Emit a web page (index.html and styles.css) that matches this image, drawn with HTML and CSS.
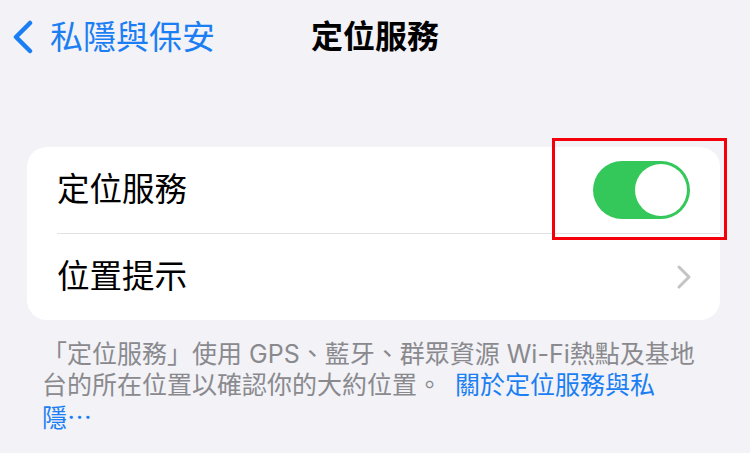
FILE: index.html
```html
<!DOCTYPE html>
<html lang="zh-Hant">
<head>
    <meta charset="UTF-8">
    <meta name="viewport" content="width=device-width, initial-scale=1.0">
    <title>定位服務</title>
    <link rel="stylesheet" href="styles.css">
</head>
<body>
    <header class="nav">
        <a class="nav-back" href="#">
            <svg class="back-icon" width="22" height="34" viewBox="0 0 22 34">
                <polyline points="18,3 4,17 18,31" fill="none" stroke="currentColor" stroke-width="4.5" stroke-linecap="round" stroke-linejoin="round"/>
            </svg>
            <span>私隱與保安</span>
        </a>
        <h1 class="nav-title">定位服務</h1>
        <div></div>
    </header>

    <section class="card">
        <div class="row">
            <span class="row-label">定位服務</span>
            <div class="toggle-wrap">
                <div class="toggle on"><div class="knob"></div></div>
                <div class="highlight"></div>
            </div>
        </div>
        <div class="row">
            <span class="row-label">位置提示</span>
            <svg class="chevron" width="16" height="26" viewBox="0 0 16 26">
                <polyline points="3,3 13,13 3,23" fill="none" stroke="currentColor" stroke-width="3" stroke-linecap="round" stroke-linejoin="round"/>
            </svg>
        </div>
    </section>

    <p class="footnote">「定位服務」使用 GPS、藍牙、群眾資源 Wi-Fi熱點及基地台的所在位置以確認你的大約位置。 <a href="#">關於定位服務與私<span class="cjk">隱…</span></a></p>
</body>
</html>
```

FILE: styles.css
```css
body {
    margin: 0;
    background-color: #f2f2f7;
    font-family: Inter, "Noto Sans CJK TC", "Noto Sans", sans-serif;
    color: #000;
}

.nav {
    display: grid;
    grid-template-columns: 1fr auto 1fr;
    align-items: center;
    height: 40px;
    padding-top: 17px;
}

.nav-back {
    display: flex;
    align-items: center;
    gap: 16px;
    padding-left: 12px;
    color: #1b7ff3;
    text-decoration: none;
    font-size: 33px;
    line-height: 40px;
}

.back-icon {
    display: block;
}

.nav-title {
    margin: 0;
    font-size: 32px;
    font-weight: 700;
    line-height: 40px;
}

.card {
    margin: 90px 30px 0 27px;
    background-color: #fff;
    border-radius: 20px;
}

.row {
    display: flex;
    align-items: center;
    justify-content: space-between;
    height: 86px;
    margin-left: 30px;
    padding-right: 30px;
}

.row + .row {
    border-top: 1.5px solid #e2e2e5;
}

.row-label {
    font-size: 32.5px;
    line-height: 40px;
}

.toggle-wrap {
    position: relative;
}

.toggle {
    width: 97px;
    height: 58px;
    border-radius: 29px;
    background-color: #e5e5ea;
    box-sizing: border-box;
    padding: 3px;
}

.toggle.on {
    background-color: #34c759;
    display: flex;
    justify-content: flex-end;
}

.knob {
    width: 52px;
    height: 52px;
    border-radius: 50%;
    background-color: #fff;
}

/* red annotation box around the switch */
.highlight {
    position: absolute;
    left: -41px;
    top: -23px;
    width: 175px;
    height: 102px;
    border: 3px solid #f5000a;
    box-sizing: border-box;
}

.chevron {
    display: block;
    color: #c4c4c7;
    margin-right: -2px;
}

.footnote {
    margin: 19px 52px 0 42px;
    font-size: 25px;
    line-height: 31px;
    color: #8a8a8e;
}

.footnote a {
    margin-left: 6px;
    color: #1b7ff3;
    text-decoration: none;
}

.footnote .cjk {
    font-family: "Noto Sans CJK TC", sans-serif;
}
```
